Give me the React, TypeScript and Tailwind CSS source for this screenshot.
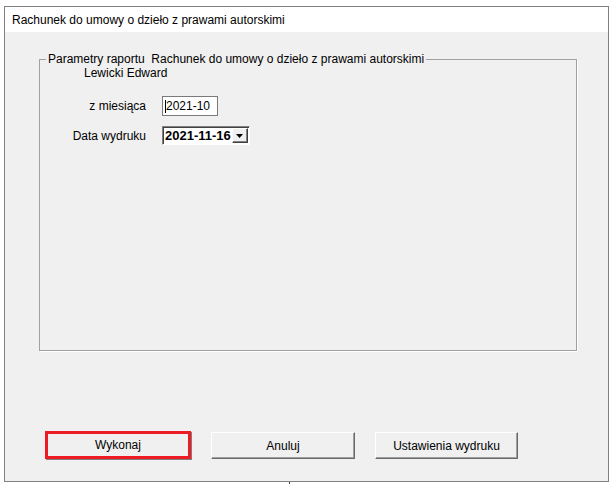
const btn =
  'flex items-center justify-center h-[27px] bg-[#f0f0f0] text-[12px] text-black border border-t-white border-l-white border-r-[#696969] border-b-[#696969] shadow-[inset_-1px_-1px_0_#a0a0a0]'

export default function App() {
  return (
    <div className="w-[614px] h-[489px] bg-white font-['Liberation_Sans',Arial,sans-serif] text-[12px] text-black">
      <div className="h-[6px]" />
      <div className="ml-[4px] w-[605px] h-[476px] border border-[#808080] flex flex-col">
        {/* title */}
        <div className="h-[25px] bg-white flex items-center pl-[7px] text-[12px] leading-none">
          Rachunek do umowy o dzieło z prawami autorskimi
        </div>

        {/* body */}
        <div className="flex-1 bg-[#f0f0f0] flex flex-col">
          <fieldset className="mt-[20px] ml-[34px] w-[538px] h-[299px] border border-[#a0a0a0] shadow-[1px_1px_0_#ffffff]">
            <legend className="ml-[6px] px-[2px] leading-[15px]">
              Parametry raportu&nbsp; Rachunek do umowy o dzieło z prawami autorskimi
            </legend>
            <div className="pl-[44px] leading-[15px] -mt-[1px]">Lewicki Edward</div>

            <div className="mt-[15px] flex items-center">
              <div className="w-[106px] text-right">z miesiąca</div>
              <div className="ml-[16px] w-[56px] h-[20px] bg-white border border-[#7a7a7a] flex items-center pl-[2px]">
                <span className="w-[1px] h-[13px] bg-black" />
                <span>2021-10</span>
              </div>
            </div>

            <div className="mt-[10px] flex items-center">
              <div className="w-[106px] text-right">Data wydruku</div>
              <div className="ml-[16px] w-[88px] h-[19px] bg-white border border-t-[#808080] border-l-[#808080] border-r-white border-b-white shadow-[inset_1px_1px_0_#404040] flex items-center justify-between pl-[2px] pr-[1px]">
                <span className="font-bold text-[13px] leading-none">2021-11-16</span>
                <div className="w-[16px] h-[15px] bg-[#f0f0f0] border border-t-white border-l-white border-r-[#404040] border-b-[#404040] shadow-[inset_-1px_-1px_0_#808080] flex items-center justify-center">
                  <svg width="8" height="4" viewBox="0 0 8 4">
                    <path d="M0 0H7L3.5 4Z" fill="#000" />
                  </svg>
                </div>
              </div>
            </div>
          </fieldset>

          <div className="mt-[81px] ml-[40px] flex items-start">
            <div className="w-[146px] h-[28px] border-[3px] border-[#ed1c24] bg-[#f0f0f0] flex items-center justify-center shadow-[1px_1px_0_#808080] -mt-[1px]">
              Wykonaj
            </div>
            <div className={btn + ' ml-[20px] w-[144px]'}>Anuluj</div>
            <div className={btn + ' ml-[20px] w-[143px]'}>Ustawienia wydruku</div>
          </div>
        </div>
      </div>
      <div className="ml-[289px] w-[1px] h-[2px] bg-[#404040]" />
    </div>
  )
}
